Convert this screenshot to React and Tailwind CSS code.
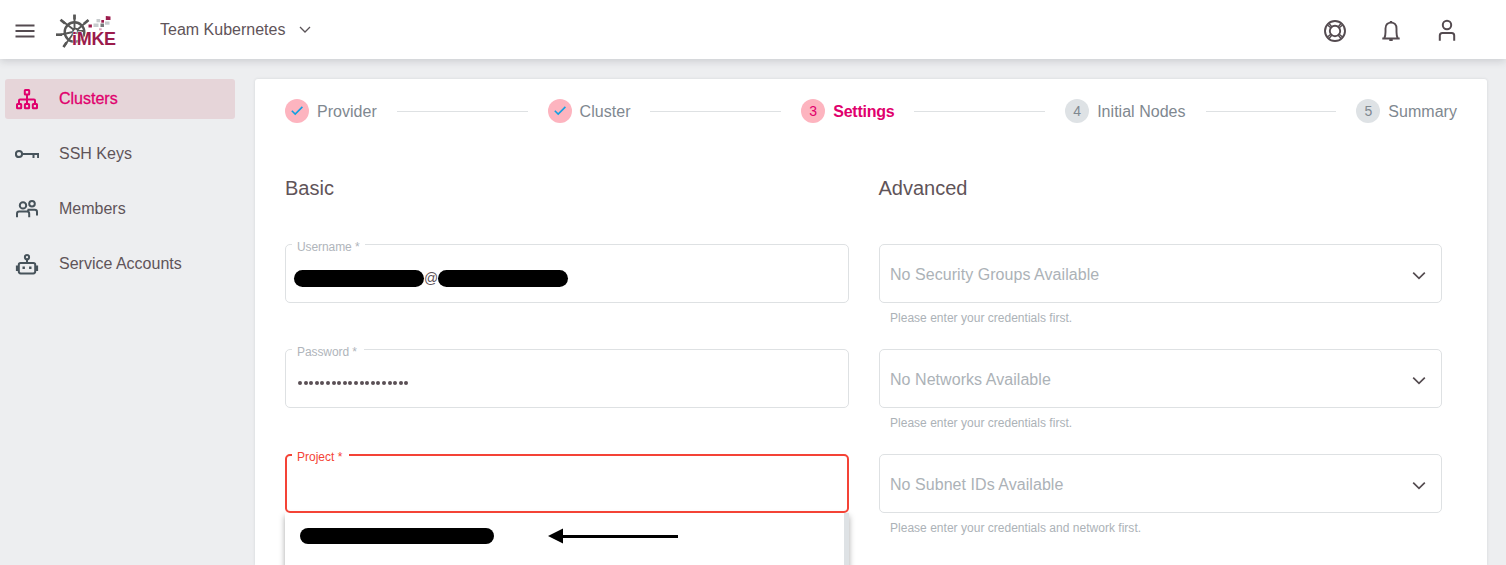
import React from "react";

function Logo() {
  return (
    <svg width="66" height="40" viewBox="0 0 66 40" className="block shrink-0 overflow-visible">
      <g fill="none" stroke="#575756">
        <circle cx="19.5" cy="18" r="9.800" strokeWidth="2.4" />
        <circle cx="20.5" cy="17" r="2.4" strokeWidth="1.800" />
        <path
          strokeWidth="1.9"
          d="M19.500 1v14M1 20.700h4l13-2.700M22 17h8M6 6l12.500 9.500M33 6.500L22 16M19 18.500L8.500 33"
        />
        <path strokeWidth="2.600" d="M19.500 0.500v5M1 20.800h6M5.500 5.800l4.500 3.800M33.500 6l-4.500 3.800M8.500 33l3-4.500" />
      </g>
      <g fill="#9b1b4c">
        <rect x="33.500" y="10.500" width="3.400" height="3" />
        <rect x="46.300" y="6" width="2.700" height="2.700" />
        <path d="M50.800 2l4.700 .4v3.600h-4.700z" />
      </g>
      <g fill="#c6cacc">
        <rect x="38.500" y="9.500" width="5" height="3.500" />
        <rect x="41.500" y="5" width="3.700" height="3.300" />
        <rect x="50" y="7.500" width="4.500" height="3.200" />
      </g>
      <rect x="45.500" y="9.500" width="3.500" height="3.500" fill="#777a7b" />
      <rect x="44" y="14.300" width="2.700" height="2" fill="#dfa6bb" />
      <text
        x="17"
        y="31"
        fill="#9b1b4c"
        stroke="#fff"
        strokeWidth="0.800"
        paintOrder="stroke"
        className="font-['Liberation_Sans',sans-serif] text-[18px] font-bold tracking-[-0.3px]"
      >
        iMKE
      </text>
    </svg>
  );
}

function Chevron({ thin }) {
  return thin ? (
    <svg width="12" height="8" viewBox="0 0 12 8" fill="none" stroke="#5a5357" strokeWidth="1.3">
      <path d="M1 1L6 6L11 1" />
    </svg>
  ) : (
    <svg width="14" height="9" viewBox="0 0 14 9" fill="none" stroke="#544b50" strokeWidth="1.700">
      <path d="M1.200 1.600L7 7.300L12.800 1.600" />
    </svg>
  );
}

const NAV_ICONS = {
  clusters: (
    <g transform="translate(0 1)">
      <rect x="9.800" y="2" width="4.400" height="4.400" rx="0.500" />
      <path d="M12 6.400v9.400M4 15.800v-3.400q0-1 1-1h14q1 0 1 1v3.400" />
      <rect x="2" y="16" width="4.200" height="4.200" rx="0.500" />
      <rect x="9.900" y="16" width="4.200" height="4.200" rx="0.500" />
      <rect x="17.800" y="16" width="4.200" height="4.200" rx="0.500" />
    </g>
  ),
  keys: (
    <>
      <circle cx="4" cy="12" r="3.100" />
      <path d="M7 12h17M18.500 12v4M23.100 12v4" />
    </>
  ),
  members: (
    <>
      <circle cx="8" cy="8.400" r="3.200" />
      <circle cx="17" cy="6.800" r="2.800" />
      <path d="M2 20.300v-3.500q0-2.200 2.200-2.200h7.800q2.200 0 2.200 2.200v3.500M12.500 12.700h7.300q2.200 0 2.200 2.200v3.700M13.300 15v-2.300" />
    </>
  ),
  robot: (
    <g transform="translate(0 1.200)">
      <circle cx="12" cy="4" r="2.100" />
      <path d="M12 6v4" />
      <rect x="3.800" y="9.800" width="16.400" height="10.400" rx="1.800" />
      <path d="M2.300 12.300v5.500M21.700 12.300v5.500" strokeWidth="2.800" />
      <path d="M7.500 14.500h2.400M14.100 14.500h2.400" strokeWidth="2.400" />
    </g>
  ),
};

function NavItem({ icon, label, active }) {
  return (
    <a
      className={
        active
          ? "flex h-10 items-center rounded-[3px] bg-[#e6d5d9] pl-2.5 text-[#e0006d]"
          : "flex h-10 items-center rounded-[3px] pl-2.5 text-[#5f5459]"
      }
    >
      <svg
        width="24"
        height="24"
        viewBox="0 0 24 24"
        fill="none"
        strokeWidth="2"
        className={active ? "shrink-0 stroke-[#e0006d]" : "shrink-0 stroke-[#47535b]"}
      >
        {NAV_ICONS[icon]}
      </svg>
      <span className={active ? "ml-5 pb-px [-webkit-text-stroke:0.3px]" : "ml-5 pb-px"}>{label}</span>
    </a>
  );
}

function Step({ n, label, state }) {
  return (
    <div className="flex shrink-0 items-center">
      <span
        className={
          state === "todo"
            ? "flex size-6 items-center justify-center rounded-full bg-[#dee2e5] text-sm text-[#7f8890]"
            : "flex size-6 items-center justify-center rounded-full bg-[#fdb4bf] text-sm text-[#e0006d]"
        }
      >
        {state === "done" ? (
          <svg width="14" height="12" viewBox="0 0 14 12" fill="none" stroke="#13a0e0" strokeWidth="1.600">
            <path d="M1.800 5.800L5.200 9.100L12.400 1.900" />
          </svg>
        ) : (
          n
        )}
      </span>
      <span
        className={
          state === "active"
            ? "ml-2 pt-0.5 font-bold tracking-[-0.25px] text-[#e0006d]"
            : "ml-2 pt-0.5 tracking-[0.03px] text-[#7f8890]"
        }
      >
        {label}
      </span>
    </div>
  );
}

function Line() {
  return <div className="mx-5 h-px flex-1 bg-[#dee1e3]" />;
}

function Field({ label, labelWidth, error, children }) {
  return (
    <div
      className={
        error
          ? "relative flex h-[59px] items-center rounded-[5px] border-2 border-[#f44336]"
          : "relative flex h-[59px] items-center rounded-[5px] border border-[#dee1e3]"
      }
    >
      <label
        className={
          (error
            ? "absolute -top-[7px] left-[5px] bg-white pl-[5px] text-xs leading-4 text-[#f44336] "
            : "absolute -top-1.5 left-1.5 bg-white pl-[5px] text-xs leading-4 tracking-[-0.08px] text-[#b0b5bb] ") + labelWidth
        }
      >
        {label}
      </label>
      {children}
    </div>
  );
}

function SelectField({ text, hint }) {
  return (
    <div className="h-[105px]">
      <div className="flex h-[59px] items-center justify-between rounded-[5px] border border-[#dee1e3] pr-[15px] pl-[10.500px] text-[#acb2b7]">
        <span className="pt-0.5 tracking-[0.050px]">{text}</span>
        <span className="pt-1">
          <Chevron />
        </span>
      </div>
      <p className="mt-1.5 pl-[11.500px] text-xs leading-[18px] tracking-[0.020px] text-[#acb2b7]">{hint}</p>
    </div>
  );
}

export default function App() {
  return (
    <div className="flex h-[565px] w-full flex-col overflow-hidden bg-[#edeef0] font-['Liberation_Sans',Arial,sans-serif] text-base text-[#5f5459]">
      <header className="z-10 flex h-[59px] shrink-0 items-center bg-white pr-[47px] pl-[15px] shadow-[0_2px_8px_rgba(60,65,75,0.2)]">
        <svg width="20" height="14" viewBox="0 0 20 14" stroke="#544b50" strokeWidth="1.800" className="mt-0.5">
          <path d="M0.500 1.500h19M0.500 7h19M0.500 12.500h19" />
        </svg>
        <div className="ml-5 pt-2">
          <Logo />
        </div>
        <span className="ml-[39px]">Team Kubernetes</span>
        <span className="ml-3.5">
          <Chevron thin />
        </span>
        <div className="ml-auto flex items-center gap-8 pt-0.5">
          <svg width="24" height="24" viewBox="0 0 24 24" fill="none" stroke="#544b50" strokeWidth="1.900">
            <circle cx="12" cy="12" r="10" />
            <circle cx="12" cy="12" r="5.200" />
            <path d="M4.500 6L8 9M6 4.500L9 8M18 4.500L15 8M19.500 6L16 9M4.500 18L8 15M6 19.500L9 16M18 19.500L15 16M19.500 18L16 15" strokeWidth="1.400" />
          </svg>
          <svg width="24" height="24" viewBox="0 0 24 24" fill="none" stroke="#544b50" strokeWidth="1.900">
            <path d="M3.300 19.500h17.400M5.300 19.300Q6.500 17 6.500 13V9.500C6.500 5.500 9 3.600 12 3.600s5.500 1.900 5.500 5.900V13q0 4 1.200 6.300" />
            <path d="M10.800 2.900h2.400M10.300 20.900h3.400" strokeWidth="2" />
          </svg>
          <svg width="24" height="24" viewBox="0 0 24 24" fill="none" stroke="#544b50" strokeWidth="2">
            <circle cx="12" cy="6" r="4.200" />
            <path d="M4.800 21.700V16.500q0-2.500 2.500-2.500h9.400q2.500 0 2.500 2.500v5.200" />
          </svg>
        </div>
      </header>
      <div className="flex min-h-0 flex-1">
        <nav className="flex w-[255px] shrink-0 flex-col gap-[15px] pt-5 pr-5 pl-[5px]">
          <NavItem icon="clusters" label="Clusters" active />
          <NavItem icon="keys" label="SSH Keys" />
          <NavItem icon="members" label="Members" />
          <NavItem icon="robot" label="Service Accounts" />
        </nav>
        <main className="mt-5 mr-[19px] flex-1 rounded-t-[3px] bg-white px-[30px] pt-5 shadow-[0_0_3px_rgba(60,65,75,0.14)]">
          <div className="flex h-6 items-center">
            <Step label="Provider" state="done" />
            <Line />
            <Step label="Cluster" state="done" />
            <Line />
            <Step n="3" label="Settings" state="active" />
            <Line />
            <Step n="4" label="Initial Nodes" state="todo" />
            <Line />
            <Step n="5" label="Summary" state="todo" />
          </div>
          <div className="mt-[50px] flex gap-[30px] pr-[15px]">
            <section className="min-w-0 flex-1">
              <h2 className="h-[71px] text-xl leading-[30px]">Basic</h2>
              <div className="h-[105px]">
                <Field label="Username *" labelWidth="w-[73px]">
                  <div className="flex items-center pt-2.5 pl-2 text-sm leading-[17px]">
                    <span className="h-[17px] w-[130px] rounded-full bg-black" />
                    <span className="w-3.5">@</span>
                    <span className="h-[17px] w-[130px] rounded-full bg-black" />
                  </div>
                </Field>
              </div>
              <div className="h-[105px]">
                <Field label="Password *" labelWidth="w-[72px]">
                  <div className="flex gap-[1.600px] pt-2 pl-3">
                    {Array.from({ length: 20 }, (_, i) => (
                      <span key={i} className="size-1 shrink-0 rounded-full bg-[#5a5055]" />
                    ))}
                  </div>
                </Field>
              </div>
              <Field label="Project *" labelWidth="w-[57px]" error />
              <div className="flex h-[60px] justify-between bg-white shadow-[0_3px_6px_rgba(0,0,0,0.35)]">
                <div className="flex h-[46px] items-center pl-[15px]">
                  <span className="h-4 w-[194px] rounded-full bg-black" />
                  <svg width="130" height="16" viewBox="0 0 130 16" className="ml-[54px]">
                    <path d="M0 8L15 0.500V15.500Z" />
                    <path d="M14 7h116v3H14z" />
                  </svg>
                </div>
                <div className="w-[5px] bg-[#dee2e5]" />
              </div>
            </section>
            <section className="min-w-0 flex-1">
              <h2 className="h-[71px] text-xl leading-[30px]">Advanced</h2>
              <SelectField text="No Security Groups Available" hint="Please enter your credentials first." />
              <SelectField text="No Networks Available" hint="Please enter your credentials first." />
              <SelectField text="No Subnet IDs Available" hint="Please enter your credentials and network first." />
            </section>
          </div>
        </main>
      </div>
    </div>
  );
}
